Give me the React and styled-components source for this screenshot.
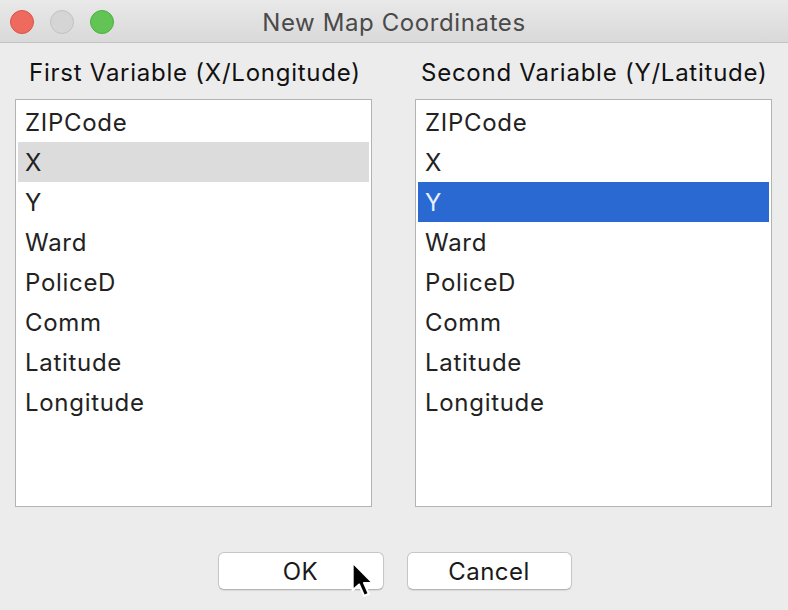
import React from 'react';
import styled, { createGlobalStyle } from 'styled-components';

const GlobalStyle = createGlobalStyle`
	html, body {
		margin: 0;
		padding: 0;
		background: #ececec;
	}
	body {
		font-family: Inter, Roboto, "Liberation Sans", sans-serif;
		-webkit-font-smoothing: antialiased;
	}
`;

const Window = styled.div`
	width: 788px;
	height: 610px;
	background: #ececec;
	display: flex;
	flex-direction: column;
	overflow: hidden;
`;

const TitleBar = styled.div`
	position: relative;
	height: 42px;
	border-bottom: 1px solid #c4c4c4;
	background: linear-gradient(#e9e9e9, #d9d9d9);
	display: flex;
	align-items: center;
	justify-content: center;
	box-sizing: content-box;
`;

const Lights = styled.div`
	position: absolute;
	left: 10px;
	top: 10px;
	display: flex;
	gap: 16px;
`;

const Light = styled.span`
	width: 24px;
	height: 24px;
	border-radius: 50%;
	box-sizing: border-box;
	background: ${(props) => props.color};
	border: 1px solid ${(props) => props.edge};
`;

const Title = styled.h1`
	margin: 3px 0 0;
	font-size: 24px;
	font-weight: 400;
	color: #4a4a4a;
	letter-spacing: 0.6px;
`;

const Body = styled.div`
	flex: 1;
	display: flex;
	flex-direction: column;
	padding: 14px 16px 0 15px;
`;

const Columns = styled.div`
	display: grid;
	grid-template-columns: 357px 357px;
	column-gap: 43px;
`;

const Column = styled.div`
	display: flex;
	flex-direction: column;
`;

const Label = styled.div`
	font-size: 24px;
	line-height: 32px;
	letter-spacing: 0.75px;
	color: #111;
	padding-left: ${(props) => props.indent}px;
	margin-bottom: 10px;
	white-space: nowrap;
`;

const ListBox = styled.div`
	height: 408px;
	box-sizing: border-box;
	background: #fff;
	border: 1px solid #b3b3b3;
	padding: 2px;
	display: flex;
	flex-direction: column;
`;

const Row = styled.div`
	height: 40px;
	line-height: 41px;
	font-size: 24px;
	letter-spacing: 0.7px;
	padding-left: 7px;
	color: ${(props) => (props.active ? '#e8efff' : '#222')};
	background: ${(props) =>
		props.active ? '#2a69d2' : props.muted ? '#dcdcdc' : 'transparent'};
`;

const Buttons = styled.div`
	display: flex;
	justify-content: center;
	gap: 23px;
	margin-top: 45px;
	padding-left: 2px;
`;

const Button = styled.button`
	position: relative;
	width: ${(props) => props.w}px;
	height: 38px;
	background: #fff;
	border: 1px solid #c6c6c6;
	border-bottom-color: #b5b5b5;
	border-radius: 6px;
	box-shadow: 0 1px 1px rgba(0, 0, 0, 0.08);
	font-family: inherit;
	font-size: 24px;
	letter-spacing: 0.5px;
	color: #1a1a1a;
	padding: 0;
`;

const Cursor = styled.svg`
	position: absolute;
	left: 132px;
	top: 8px;
`;

const variables = ['ZIPCode', 'X', 'Y', 'Ward', 'PoliceD', 'Comm', 'Latitude', 'Longitude'];

const App = () => {
	return (
		<Window>
			<GlobalStyle />
			<TitleBar>
				<Lights>
					<Light color="#ee6a5f" edge="#d9534a" />
					<Light color="#d5d5d5" edge="#c2c2c2" />
					<Light color="#61c454" edge="#4fae43" />
				</Lights>
				<Title>New Map Coordinates</Title>
			</TitleBar>
			<Body>
				<Columns>
					<Column>
						<Label indent={14}>First Variable (X/Longitude)</Label>
						<ListBox>
							{variables.map((v) => (
								<Row key={v} muted={v === 'X'}>
									{v}
								</Row>
							))}
						</ListBox>
					</Column>
					<Column>
						<Label indent={6}>Second Variable (Y/Latitude)</Label>
						<ListBox>
							{variables.map((v) => (
								<Row key={v} active={v === 'Y'}>
									{v}
								</Row>
							))}
						</ListBox>
					</Column>
				</Columns>
				<Buttons>
					<Button w={166}>
						OK
						<Cursor width="26" height="39" viewBox="0 0 16 24">
							<path
								d="M1 1 L1 18 L5 14.5 L8 21.5 L11 20.2 L8 13.5 L13.5 13.5 Z"
								fill="#000"
								stroke="#fff"
								strokeWidth="1.3"
								strokeLinejoin="round"
							/>
						</Cursor>
					</Button>
					<Button w={165}>Cancel</Button>
				</Buttons>
			</Body>
		</Window>
	);
};

export default App;
